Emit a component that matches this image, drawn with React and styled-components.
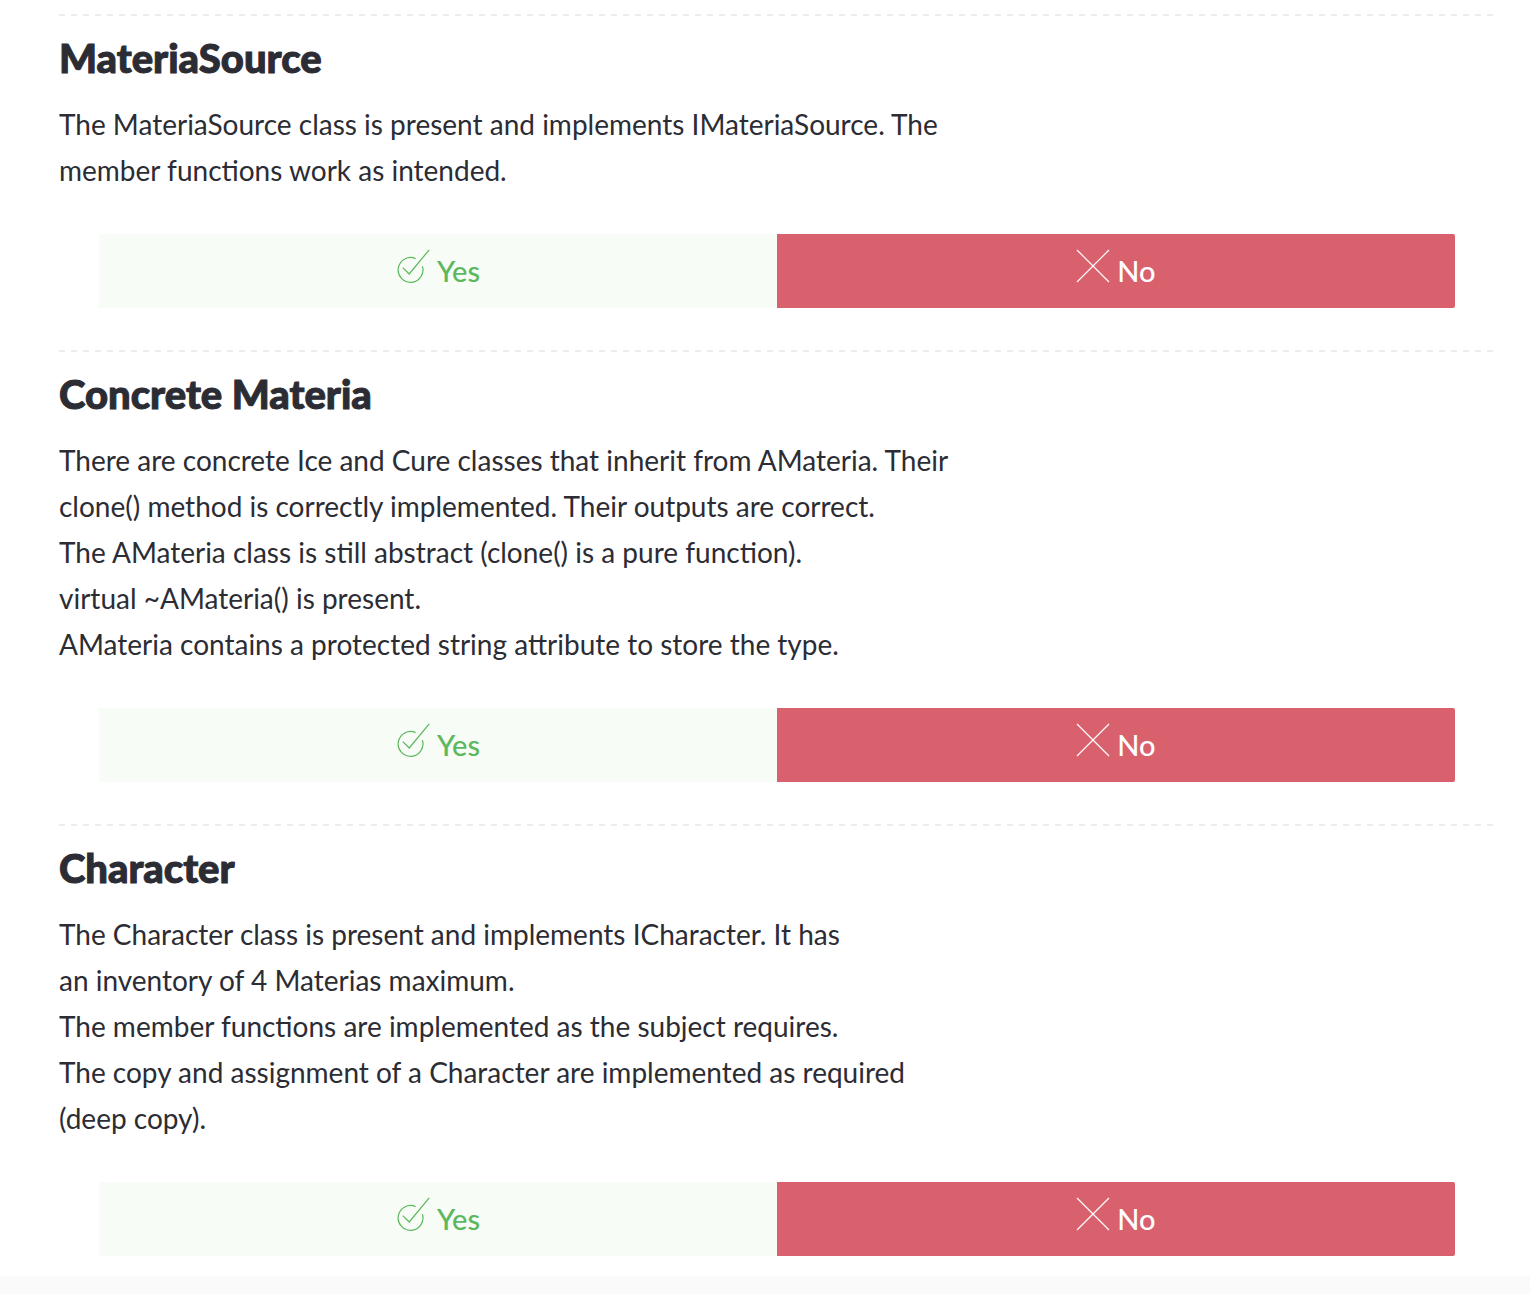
import React from "react";
import styled, { createGlobalStyle } from "styled-components";

const GlobalStyle = createGlobalStyle`
  *, *::before, *::after { box-sizing: border-box; }
  body {
    margin: 0;
    background: #fafafa;
    color: #2c2c34;
    font-family: Lato, "Open Sans", sans-serif;
  }
`;

const Sheet = styled.main`
  display: flex;
  flex-direction: column;
  gap: 42px;
  padding: 14px 35px 20px 59px;
  background: #fff;
`;

const Section = styled.section`
  display: flex;
  flex-direction: column;
`;

const Divider = styled.hr`
  width: 100%;
  height: 2px;
  margin: 0;
  border: 0;
  background: repeating-linear-gradient(to right, #ececec 0 6px, transparent 6px 12px);
`;

const Title = styled.h2`
  margin: 19px 0 0;
  font-size: 40px;
  line-height: 46px;
  font-weight: 900;
  -webkit-text-stroke: 1px currentColor;
`;

const Description = styled.p`
  margin: 20px 0 0;
  font-size: 28px;
  line-height: 46px;
  white-space: pre-line;
`;

const Answers = styled.div`
  display: grid;
  grid-template-columns: 1fr 1fr;
  margin: 41px 40px 0;
`;

const Answer = styled.button`
  display: flex;
  align-items: center;
  justify-content: center;
  gap: 7px;
  height: 74px;
  padding: 0;
  border: 0;
  border-radius: ${(p) => (p.$negative ? "0 2px 2px 0" : "2px 0 0 2px")};
  background: ${(p) => (p.$negative ? "#d9616e" : "#f7fcf7")};
  color: ${(p) => (p.$negative ? "#fff" : "#5cb85c")};
  font-family: inherit;
  font-size: 29px;
  line-height: 46px;
  font-weight: 500;
  cursor: pointer;
`;

const Icon = styled.svg`
  width: 34px;
  height: 34px;
  margin-bottom: 10px;
  fill: none;
  stroke: currentColor;
  stroke-width: 1.2;
`;

const CheckIcon = () => (
  <Icon viewBox="0 0 34 34" aria-hidden="true">
    <path d="M19.6 9.6A12.4 12.4 0 1 0 26.4 17.2" />
    <path d="M6.8 18.6L13.2 25L33.2 .8" />
  </Icon>
);

const CrossIcon = () => (
  <Icon viewBox="0 0 34 34" aria-hidden="true">
    <path d="M1 1L33 33M33 1L1 33" />
  </Icon>
);

const items = [
  {
    title: "MateriaSource",
    text: `The MateriaSource class is present and implements IMateriaSource. The
member functions work as intended.`,
  },
  {
    title: "Concrete Materia",
    text: `There are concrete Ice and Cure classes that inherit from AMateria. Their
clone() method is correctly implemented. Their outputs are correct.
The AMateria class is still abstract (clone() is a pure function).
virtual ~AMateria() is present.
AMateria contains a protected string attribute to store the type.`,
  },
  {
    title: "Character",
    text: `The Character class is present and implements ICharacter. It has
an inventory of 4 Materias maximum.
The member functions are implemented as the subject requires.
The copy and assignment of a Character are implemented as required
(deep copy).`,
  },
];

export default function App() {
  return (
    <>
      <GlobalStyle />
      <Sheet>
        {items.map((item) => (
          <Section key={item.title}>
            <Divider />
            <Title>{item.title}</Title>
            <Description>{item.text}</Description>
            <Answers role="group" aria-label={item.title}>
              <Answer type="button">
                <CheckIcon />
                Yes
              </Answer>
              <Answer type="button" $negative>
                <CrossIcon />
                No
              </Answer>
            </Answers>
          </Section>
        ))}
      </Sheet>
    </>
  );
}
